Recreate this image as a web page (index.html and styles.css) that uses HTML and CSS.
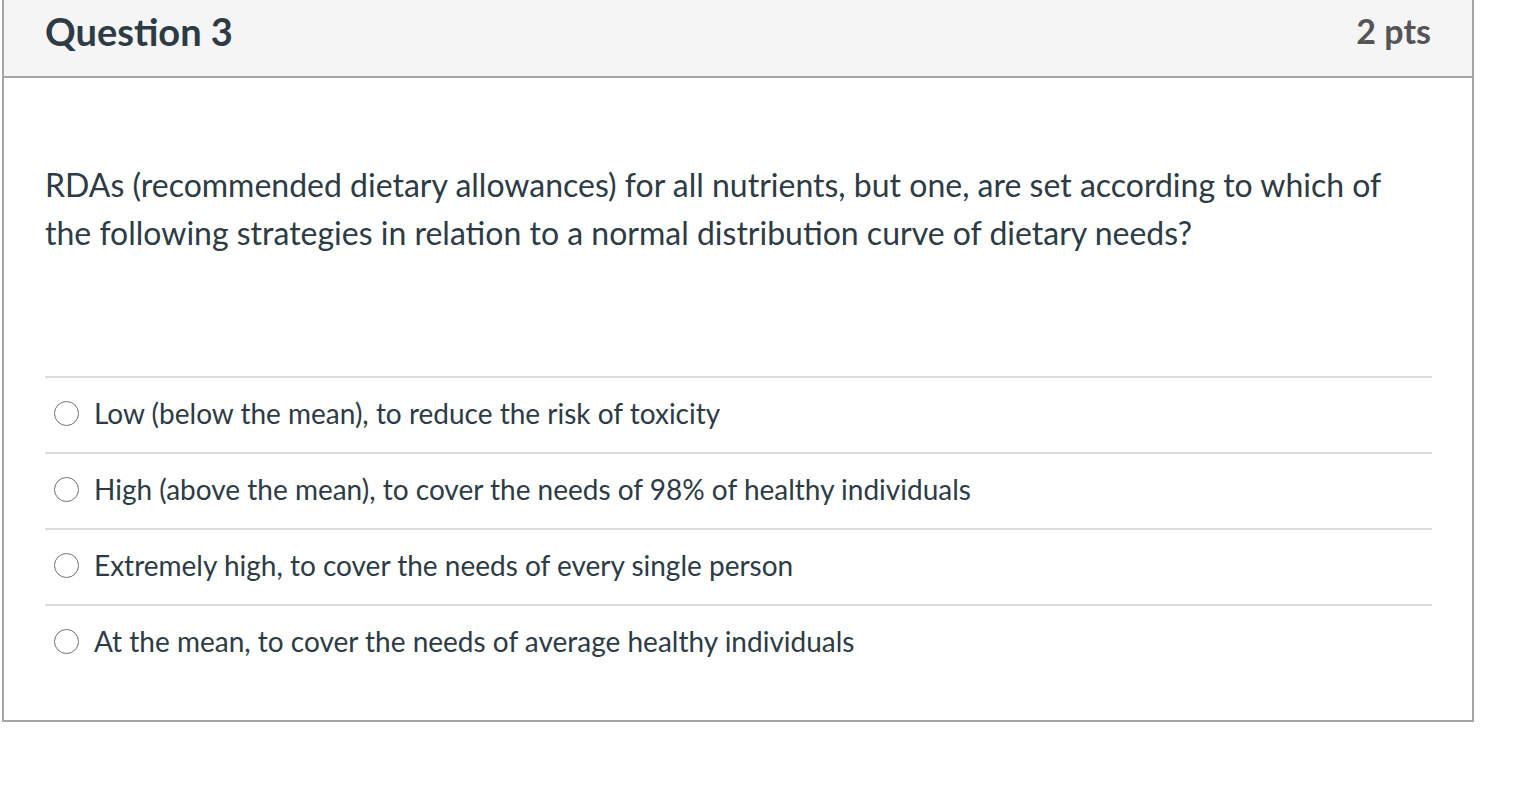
FILE: index.html
```html
<!DOCTYPE html>
<html lang="en">
<head>
<meta charset="utf-8">
<title>Question 3</title>
<link rel="stylesheet" href="styles.css">
</head>
<body>
<div class="question">
  <div class="question-header">
    <h2 class="question-title">Question 3</h2>
    <span class="question-points">2 pts</span>
  </div>
  <div class="question-body">
    <p class="question-text">RDAs (recommended dietary allowances) for all nutrients, but one, are set according to which of the following strategies in relation to a normal distribution curve of dietary needs?</p>
    <ul class="answers">
      <li class="answer"><span class="radio"></span><span class="answer-label">Low (below the mean), to reduce the risk of toxicity</span></li>
      <li class="answer"><span class="radio"></span><span class="answer-label">High (above the mean), to cover the needs of 98% of healthy individuals</span></li>
      <li class="answer"><span class="radio"></span><span class="answer-label">Extremely high, to cover the needs of every single person</span></li>
      <li class="answer"><span class="radio"></span><span class="answer-label">At the mean, to cover the needs of average healthy individuals</span></li>
    </ul>
  </div>
</div>
</body>
</html>
```
FILE: styles.css
```css
html, body {
  margin: 0;
  padding: 0;
  background: #ffffff;
}
body {
  font-family: Lato, "Open Sans", sans-serif;
  color: #2d3b45;
}
.question {
  margin-left: 2px;
  width: 1468px;
  border: 2px solid #a5a5a5;
  border-top: none;
}
.question-header {
  display: flex;
  justify-content: space-between;
  align-items: center;
  height: 76px;
  padding: 0 41px 0 41px;
  background: #f5f5f5;
  border-bottom: 2px solid #a5a5a5;
}
.question-title {
  margin: 0;
  font-size: 38px;
  font-weight: 700;
  line-height: 1;
  color: #2d3b45;
  padding-bottom: 14px;
}
.question-points {
  font-size: 34px;
  font-weight: 700;
  line-height: 1;
  color: #555555;
  padding-bottom: 14px;
}
.question-body {
  padding: 0 40px 40px 41px;
}
.question-text {
  margin: 0;
  padding: 83px 0 119px;
  font-size: 32px;
  line-height: 48px;
}
.answers {
  list-style: none;
  margin: 0;
  padding: 0;
}
.answer {
  display: flex;
  align-items: center;
  height: 71px;
  padding-bottom: 3px;
  border-top: 2px solid #dcdcdc;
}
.radio {
  width: 23px;
  height: 23px;
  border: 1.5px solid #737373;
  border-radius: 50%;
  margin-left: 9px;
  margin-right: 15px;
  flex: none;
  box-sizing: content-box;
}
.answer-label {
  font-size: 28px;
  line-height: 1.2;
}
```
